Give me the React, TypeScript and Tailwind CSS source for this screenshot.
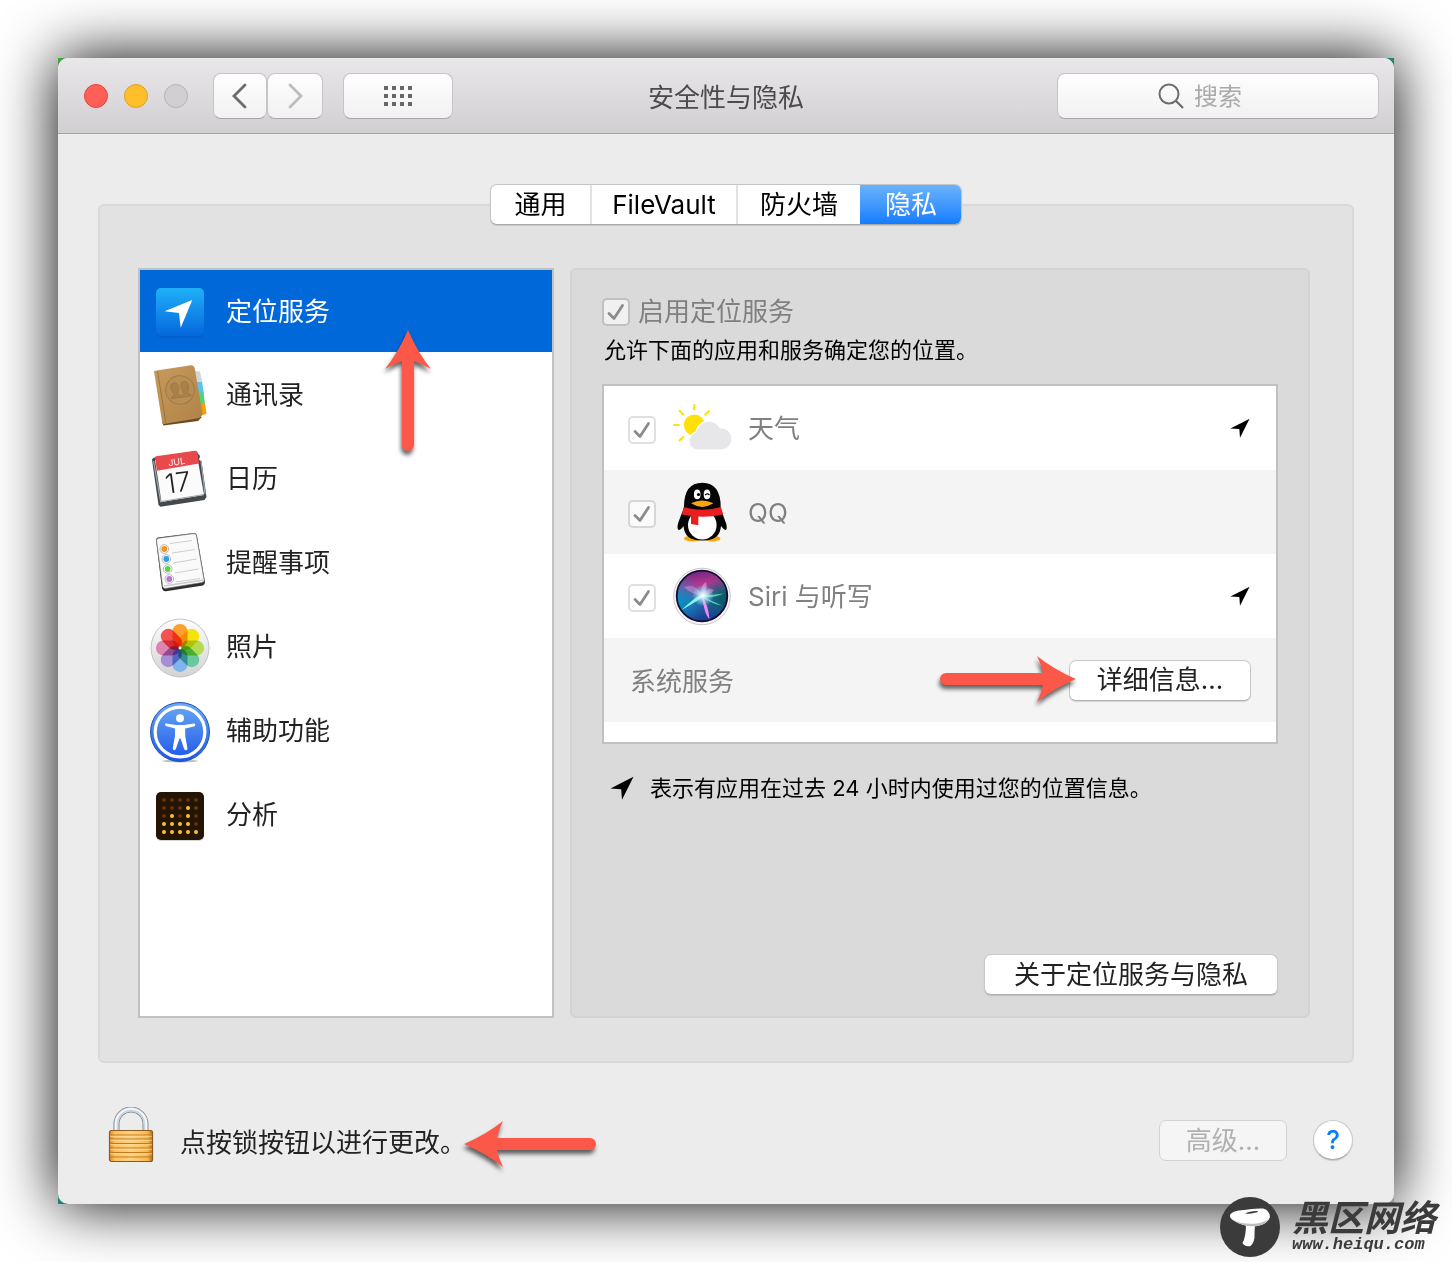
import React from "react";

type IconProps = { children: React.ReactNode };

function Icon({ children }: IconProps) {
  return (
    <svg viewBox="0 0 60 60" className="size-[60px] shrink-0 overflow-visible" aria-hidden="true">
      {children}
    </svg>
  );
}

function LocationIcon() {
  return (
    <Icon>
      <defs>
        <linearGradient id="g-loc" x1="0" y1="0" x2="0" y2="1">
          <stop offset="0" stopColor="#1fb0f8" />
          <stop offset="1" stopColor="#0567dd" />
        </linearGradient>
      </defs>
      <rect x="6" y="8.5" width="48" height="48" rx="5" fill="#0055b8" opacity=".5" />
      <rect x="6" y="7" width="48" height="48" rx="5" fill="url(#g-loc)" />
      <path d="M14.5 30.3 42.3 19 30.7 46.7 29 32Z" fill="#fff" />
    </Icon>
  );
}

function ContactsIcon() {
  return (
    <Icon>
      <defs>
        <linearGradient id="g-book" x1="0" y1="0" x2="1" y2="1">
          <stop offset="0" stopColor="#c79a5d" />
          <stop offset="1" stopColor="#b08247" />
        </linearGradient>
      </defs>
      <path d="M44.5 7 50 7.5 52.5 19 47 20Z" fill="#d3d6d8" />
      <path d="M46.5 18 52 18 54 29.5 48 30Z" fill="#58c4e8" />
      <path d="M48 29 53.5 28.5 55 40 49 41Z" fill="#55d36c" />
      <path d="M49 40 55 39 56.5 50 50.5 51.5Z" fill="#f2a10c" />
      <path d="M12 58 50 52.5 52 53 48 57 13.5 61.5Z" fill="#6c4a20" />
      <path d="M4 7.5Q4 7 5 6.8L41 1.3Q44 1 44.7 4L52.5 50Q52 52.5 49.5 54L14 60Q12.6 60.2 12.3 59Z" fill="url(#g-book)" />
      <path d="M7.5 7 16 59.5" stroke="#99703c" strokeWidth=".9" />
      <g transform="rotate(-8 30 26)">
        <circle cx="30" cy="26" r="14.3" fill="#b98e54" stroke="#a27a44" strokeWidth="1" />
        <path d="M20 33.5Q20.500 30.500 24 30Q20.500 25 21 21.500Q21.500 18 25 18Q28.500 18 29 21.500Q29 25 27 30Q30 30.500 30 33.500Z M30.500 33.500Q31 30.500 33.500 30Q31 26 31.300 21.500Q32 18 35 18Q38.500 18 39 21.500Q39.500 27 36.500 30Q40 30.500 40.500 33.500Z" fill="#a98048" stroke="#98713d" strokeWidth=".5" />
      </g>
    </Icon>
  );
}

function CalendarIcon() {
  return (
    <Icon>
      <path d="M2 12Q2 10 4.500 9.500L46 3 50 8 49 12 51.500 13 56.500 49 54.500 52 10.500 58.700 8.500 57Z" fill="#44494e" />
      <path d="M3.500 13 10.800 54.500M51 13 55 46" stroke="#a3a9ad" strokeWidth="1.200" />
      <path d="M5 12 47 7 54 47 11.500 54Z" fill="#fbfbfb" />
      <path d="M11.500 53.500 54 46.500" stroke="#a6a6a6" strokeWidth="1" />
      <path d="M5 9.500Q5 8.500 6 8.300L45 2.800Q47 2.600 47.500 4.500L49 15.500 7 22.800Z" fill="#e9494b" />
      <text x="26.500" y="17" transform="rotate(-8 26.500 13)" textAnchor="middle" fontSize="9" fill="#fff" className="font-[Inter]">JUL</text>
      <text x="28" y="44" transform="rotate(-8 28 35)" textAnchor="middle" fontSize="27" fontWeight="300" fill="#222" className="font-[Inter]">17</text>
    </Icon>
  );
}

function RemindersIcon() {
  const rows = [
    { x: 14.3, y: 17, c: "#fb9316" },
    { x: 16.3, y: 27, c: "#2b9fe8" },
    { x: 17.7, y: 37, c: "#5fd14c" },
    { x: 19.3, y: 47, c: "#bb74d6" },
  ];
  return (
    <Icon>
      <path d="M6 8Q6 6 8 5.500L44 1Q46 1 46.800 3L55 50Q55 52.500 53 53.500L16 59.200Q13 59.500 12 56.500Z" fill="#2f2f2f" />
      <path d="M6.500 8.500Q6.500 6.500 8.500 6.200L44 1.600Q46 1.600 46.400 3.500L54.200 48.500Q54 50 52 50.500L15 56.500Q13.200 56.500 12.700 54.500Z" fill="#fafafa" stroke="#777" strokeWidth=".6" />
      <path d="M14 54 53.500 48" stroke="#ccc" strokeWidth="1.500" />
      <path d="M20 11.500 42 8.500M22 21 45 17.500M23 31 46.500 27M25 41 48.500 37M26 50 50 46.500" stroke="#bcbcbc" strokeWidth=".7" />
      {rows.map((r) => (
        <g key={r.c}>
          <circle cx={r.x} cy={r.y} r="4.300" fill="#fff" stroke="#8e8e8e" strokeWidth=".6" />
          <circle cx={r.x} cy={r.y} r="2.900" fill={r.c} />
        </g>
      ))}
    </Icon>
  );
}

function PhotosIcon() {
  const petals = ["#fb9f2e", "#f6e30b", "#b3dc50", "#6cc7a0", "#7db5ec", "#a48fd3", "#dd84b3", "#f4524f"];
  return (
    <Icon>
      <defs>
        <linearGradient id="g-photos" x1="0" y1="0" x2="0" y2="1">
          <stop offset="0" stopColor="#fdfdfd" />
          <stop offset="1" stopColor="#d3d3d3" />
        </linearGradient>
      </defs>
      <circle cx="30" cy="32" r="29" fill="url(#g-photos)" stroke="#c4c4c4" strokeWidth="1" />
      <g className="isolate">
        {petals.map((c, i) => (
          <rect key={c} x="22.500" y="8" width="15" height="23.500" rx="7.300" fill={c} className="mix-blend-multiply" transform={`rotate(${i * 45} 30 32)`} />
        ))}
      </g>
      <circle cx="30" cy="32" r="1.400" fill="#fff" />
    </Icon>
  );
}

function AccessibilityIcon() {
  return (
    <Icon>
      <defs>
        <linearGradient id="g-acc" x1="0" y1="0" x2="0" y2="1">
          <stop offset="0" stopColor="#6aaaf3" />
          <stop offset="1" stopColor="#1d56ea" />
        </linearGradient>
      </defs>
      <ellipse cx="30" cy="61" rx="18" ry="1.500" fill="#000" opacity=".25" />
      <circle cx="30" cy="32" r="29.500" fill="url(#g-acc)" stroke="#1e54ad" strokeWidth="1" />
      <circle cx="30" cy="32" r="24.800" fill="none" stroke="#fff" strokeWidth="3.200" />
      <circle cx="30" cy="18.300" r="4" fill="#fff" />
      <path d="M15 24Q15 23.300 16.300 23.500L26 25H34L44 23.500Q45.500 23.500 45.300 25Q45 26.300 44 26.500L35.200 28.500V36L37.500 48.500Q37.500 50.500 35.700 50.300Q34.500 50.200 34 48.500L30.600 38.500H29.500L26 48.500Q25.300 50.300 24.200 50.200Q22.500 50 22.800 48L25 36V28.500L16 26Q15 25.500 15 24Z" fill="#fff" />
    </Icon>
  );
}

function AnalyticsIcon() {
  const lit = ["00000", "00010", "01010", "11110", "11111"];
  return (
    <Icon>
      <rect x="6" y="9" width="48" height="48" rx="5" fill="#aaa" opacity=".5" />
      <rect x="6" y="8" width="48" height="48" rx="5" fill="#241404" />
      {lit.map((row, y) =>
        row.split("").map((v, x) => (
          <circle key={`${x}-${y}`} cx={14 + x * 8} cy={16 + y * 8} r="2" fill={v === "1" ? "#fbc420" : x === 4 && y === 1 ? "#5a3c20" : "#62300c"} />
        )),
      )}
    </Icon>
  );
}

function WeatherIcon() {
  return (
    <Icon>
      <g stroke="#fbe01a" strokeWidth="2.200">
        <path d="M22.300 6.300V12.300M1.300 27H7.600M7 12.300 11.800 17.200M37.700 12.500 32.700 17.300M11.800 38.500 7 43" />
      </g>
      <circle cx="22.300" cy="27" r="10.500" fill="#ffe00a" />
      <g fill="#e7e7e9" stroke="#fff" strokeWidth="2.500" style={{ paintOrder: "stroke" }}>
        <path d="M26 51.500A8.600 8.600 0 0 1 24.500 34.500A12.500 12.500 0 0 1 48 30.500A10.500 10.500 0 0 1 50 51.500Z" />
      </g>
    </Icon>
  );
}

function QQIcon() {
  return (
    <Icon>
      <ellipse cx="20.500" cy="56.500" rx="8.500" ry="3" fill="#f8a40c" />
      <ellipse cx="40" cy="56.500" rx="8.500" ry="3" fill="#f8a40c" />
      <path d="M12 26Q11.500 .7 30.300 .7Q49 .7 48.700 26Q52 36 54 41Q55.500 46 54 48Q52 48 49 44Q48 59 30.300 58.500Q12.500 59 11.500 44Q9 48 6.500 48Q4.500 46 6.500 40Q9 33 12 26Z" fill="#050505" />
      <ellipse cx="30.300" cy="43" rx="14.300" ry="14.500" fill="#fff" />
      <path d="M11.500 25Q30 30.500 49 25L51 32.500Q31 37 10 32.500Z" fill="#ea1d1f" />
      <path d="M19 32H26.300V43.300L19 42Z" fill="#ea1d1f" />
      <ellipse cx="25.200" cy="12.400" rx="3.300" ry="4.800" fill="#fff" />
      <ellipse cx="35" cy="12.400" rx="3.300" ry="4.800" fill="#fff" />
      <circle cx="26.500" cy="12.500" r="1.600" fill="#000" />
      <path d="M33 13.200Q35 10.800 37.500 13" fill="none" stroke="#000" strokeWidth="1.200" />
      <path d="M19 21.300Q30 15.500 41.500 21.300Q30 28.500 19 21.300Z" fill="#f9a70d" />
    </Icon>
  );
}

function SiriIcon() {
  return (
    <Icon>
      <defs>
        <linearGradient id="g-siri" x1=".35" y1="0" x2=".5" y2="1">
          <stop offset="0" stopColor="#6c2580" />
          <stop offset=".28" stopColor="#b5378f" />
          <stop offset=".55" stopColor="#2c6fa8" />
          <stop offset="1" stopColor="#173b93" />
        </linearGradient>
        <radialGradient id="g-siri-left" cx="0" cy=".6" r=".55">
          <stop offset="0" stopColor="#0891c4" />
          <stop offset="1" stopColor="#0891c4" stopOpacity="0" />
        </radialGradient>
        <radialGradient id="g-siri-right" cx="1" cy=".55" r=".5">
          <stop offset="0" stopColor="#06585c" />
          <stop offset="1" stopColor="#06585c" stopOpacity="0" />
        </radialGradient>
        <radialGradient id="g-siri-core">
          <stop offset="0" stopColor="#fff" />
          <stop offset=".3" stopColor="#d9f6ff" stopOpacity=".8" />
          <stop offset="1" stopColor="#9fe8ff" stopOpacity="0" />
        </radialGradient>
      </defs>
      <circle cx="30" cy="30.500" r="28.300" fill="#f7f5f7" stroke="#c9c7c9" strokeWidth="1" />
      <circle cx="30" cy="30" r="25.300" fill="url(#g-siri)" />
      <circle cx="30" cy="30" r="25.300" fill="url(#g-siri-left)" />
      <circle cx="30" cy="30" r="25.300" fill="url(#g-siri-right)" stroke="#150c35" strokeWidth="1.800" />
      <path d="M12 21Q24 17 31 30Q35 20 42 24Q38 30 31 30Q20 29 12 21Z" fill="#e59be0" opacity=".45" />
      <path d="M31 29Q27 20 34 16Q36 24 31 29Z" fill="#e9a8ee" opacity=".55" />
      <path d="M30 28Q22 32 9.500 44Q22 37 31 31Z" fill="#7ff5ea" />
      <path d="M30 29Q40 29 52 27.500Q42 32 31 31L50 39.500Q40 38 30 31Z" fill="#5ce5b5" opacity=".85" />
      <path d="M30 30Q36 38 37.500 53Q32.500 49 30 30Z" fill="#ee8de6" />
      <circle cx="31" cy="29.500" r="11" fill="url(#g-siri-core)" />
    </Icon>
  );
}

function Pointer({ small = false }: { small?: boolean }) {
  return (
    <svg viewBox="0 0 24 24" className={small ? "size-5 shrink-0" : "size-6 shrink-0"} role="img" aria-label="位置">
      <path d="M.5 12.500 23.500.8 12 23.800 11.200 13.200Z" fill="#000" />
    </svg>
  );
}

const arrowShadow = "overflow-visible drop-shadow-[-1px_4px_2px_rgba(0,0,0,0.6)] pointer-events-none";

function CheckBox({ id }: { id: string }) {
  return (
    <span className="relative grid size-7 shrink-0 place-items-center">
      <input
        id={id}
        type="checkbox"
        defaultChecked
        disabled
        className="size-7 appearance-none rounded-[5px] border-2 border-black/12 bg-white/60 bg-clip-padding"
      />
      <svg viewBox="0 0 28 28" className="pointer-events-none absolute inset-0 size-7" aria-hidden="true">
        <path d="M7 15.500 12 20.500 20.500 7.500" fill="none" stroke="#8b8b8b" strokeWidth="2.800" strokeLinecap="round" strokeLinejoin="round" />
      </svg>
    </span>
  );
}

const sidebar = [
  { name: "定位服务", icon: <LocationIcon /> },
  { name: "通讯录", icon: <ContactsIcon /> },
  { name: "日历", icon: <CalendarIcon /> },
  { name: "提醒事项", icon: <RemindersIcon /> },
  { name: "照片", icon: <PhotosIcon /> },
  { name: "辅助功能", icon: <AccessibilityIcon /> },
  { name: "分析", icon: <AnalyticsIcon /> },
];

const apps = [
  { id: "weather", name: "天气", icon: <WeatherIcon />, recent: true },
  { id: "qq", name: "QQ", icon: <QQIcon />, recent: false },
  { id: "siri", name: "Siri 与听写", icon: <SiriIcon />, recent: true },
];

const toolButton =
  "flex h-[46px] items-center justify-center rounded-lg border border-[#c6c4c6] border-b-[#a9a7a9] bg-linear-to-b from-[#fefefe] to-[#f1f1f1]";
const pushButton =
  "h-[41px] rounded-[7px] border border-[#c9c9c9] border-b-[#adadad] bg-white leading-[38px] text-[#222] shadow-[0_1px_1px_rgba(0,0,0,0.12)]";

function TitleBar() {
  return (
    <header className="grid h-[76px] grid-cols-[1fr_auto_1fr] items-center border-b border-[#a5a3a5] bg-linear-to-b from-[#e9e7e9] to-[#d1cfd1] px-[15px] pt-px">
      <div className="flex items-center pl-[11px]">
        <div className="flex gap-4">
          <button aria-label="关闭" className="size-6 rounded-full border border-[#e2443f] bg-[#ff5f57]" />
          <button aria-label="最小化" className="size-6 rounded-full border border-[#dfa023] bg-[#ffbf2b]" />
          <button aria-label="缩放" disabled className="size-6 rounded-full border border-[#b3b1b3] bg-[#d1cfd1]" />
        </div>
        <button aria-label="后退" className={`${toolButton} ml-[25px] w-[54px]`}>
          <svg viewBox="0 0 16 26" className="h-[26px] w-4" aria-hidden="true">
            <path d="M13 2 2 13 13 24" fill="none" stroke="#6b6b6b" strokeWidth="2.800" strokeLinecap="round" />
          </svg>
        </button>
        <button aria-label="前进" disabled className={`${toolButton} w-14`}>
          <svg viewBox="0 0 16 26" className="h-[26px] w-4" aria-hidden="true">
            <path d="M3 2 14 13 3 24" fill="none" stroke="#bcbcbc" strokeWidth="2.800" strokeLinecap="round" />
          </svg>
        </button>
        <button aria-label="显示全部" className={`${toolButton} ml-5 w-[110px]`}>
          <svg viewBox="0 0 28 20" className="h-5 w-7" aria-hidden="true">
            {[0, 8, 16].map((y) => [0, 8, 16, 24].map((x) => <rect key={`${x}-${y}`} x={x} y={y} width="4" height="4" fill="#666" />))}
          </svg>
        </button>
      </div>
      <h1 className="pt-1 text-[#4c4a4c]">安全性与隐私</h1>
      <label className={`${toolButton} ml-auto w-[322px] gap-2.5 pr-[34px]`}>
        <svg viewBox="0 0 26 26" className="size-[26px] shrink-0" aria-hidden="true">
          <circle cx="11" cy="11" r="9.500" fill="none" stroke="#6d6d6d" strokeWidth="2" />
          <path d="M17.800 17.800 25 25" stroke="#6d6d6d" strokeWidth="2.200" />
        </svg>
        <input type="text" placeholder="搜索" aria-label="搜索" className="w-[50px] bg-transparent pt-0.5 text-[24px] leading-8 outline-none placeholder:text-[#aaa]" />
      </label>
    </header>
  );
}

function Tabs() {
  const tab = "h-full leading-[38px] text-black";
  return (
    <div role="tablist" className="relative z-10 mx-auto -mb-[21px] flex h-[41px] w-[472px] overflow-hidden rounded-[7px] border border-[#c4c4c4] border-b-[#a8a8a8] bg-white shadow-[0_1px_1px_rgba(0,0,0,0.12)]">
      <button role="tab" aria-selected="false" className={`${tab} w-[101px] border-r-2 border-[#e2e2e2]`}>通用</button>
      <button role="tab" aria-selected="false" className={`${tab} w-[146px] border-r-2 border-[#e2e2e2]`}>FileVault</button>
      <button role="tab" aria-selected="false" className={`${tab} w-[122px]`}>防火墙</button>
      <button role="tab" aria-selected="true" className="-my-px -mr-px h-[41px] flex-1 bg-linear-to-b from-[#6bb3fa] to-[#0a7bff] leading-10 text-white">隐私</button>
    </div>
  );
}

function Sidebar() {
  return (
    <ul className="w-[416px] shrink-0 border-2 border-[#c1c1c1] bg-white">
      {sidebar.map((item, i) => (
        <li key={item.name} className={i === 0 ? "relative h-[82px] bg-[#0068d9] text-white" : "h-[84px] text-[#222]"}>
          <button className="flex size-full items-center gap-4 pl-2.5 text-left">
            {item.icon}
            <span className="pt-0.5">{item.name}</span>
          </button>
          {i === 0 && (
            <svg viewBox="0 0 46 122" className={`absolute top-[60px] left-[245px] z-10 h-[122px] w-[46px] ${arrowShadow}`} aria-hidden="true">
              <path d="M17 115V31Q9 34 0 39Q13 23 23 0Q33 23 46 39Q37 34 29 31V115A6 6 0 0 1 17 115Z" fill="#fc584a" />
            </svg>
          )}
        </li>
      ))}
    </ul>
  );
}

function LocationPane() {
  return (
    <section className="flex flex-1 flex-col rounded-md border-2 border-[#d3d3d3] bg-[#dadada] px-[30px] pt-6 pb-[21px]">
      <div className="flex items-center gap-2 text-[#808080]">
        <CheckBox id="enable" />
        <label htmlFor="enable" className="leading-9">启用定位服务</label>
      </div>
      <p className="pl-0.5 text-[22px] leading-10 text-black">允许下面的应用和服务确定您的位置。</p>
      <ul className="mt-3.5 border-2 border-[#c1c1c1] bg-white pb-5">
        {apps.map((app) => (
          <li key={app.id} className="flex h-[84px] items-center gap-4 pr-[26px] pl-6 text-[#808080] even:bg-[#f4f4f4]">
            <div className="pt-1">
              <CheckBox id={app.id} />
            </div>
            {app.icon}
            <label htmlFor={app.id} className="flex-1 pt-0.5">{app.name}</label>
            {app.recent && <Pointer small />}
          </li>
        ))}
        <li className="flex h-[84px] items-center justify-between bg-[#f4f4f4] pr-[25px] pl-[26px] text-[#808080]">
          <span className="pt-1">系统服务</span>
          <div className="relative">
            <button className={`${pushButton} w-[182px]`}>详细信息...</button>
            <svg viewBox="0 0 136 46" className={`absolute -top-1 right-[175px] h-[46px] w-[136px] ${arrowShadow}`} aria-hidden="true">
              <path d="M6 17H103Q101.500 9 97 0Q113 13 136 23Q113 33 97 46Q101.500 37 103 29H6A6 6 0 0 1 6 17Z" fill="#fc584a" />
            </svg>
          </div>
        </li>
      </ul>
      <div className="mt-6 flex items-center gap-4 pl-2 text-[22px] leading-10 text-black">
        <Pointer />
        <p>表示有应用在过去 24 小时内使用过您的位置信息。</p>
      </div>
      <button className={`${pushButton} mt-auto ml-auto w-[294px]`}>关于定位服务与隐私</button>
    </section>
  );
}

function LockIcon() {
  return (
    <svg viewBox="0 0 46 66" className="h-[66px] w-[46px]" aria-hidden="true">
      <defs>
        <linearGradient id="g-lock" x1="0" x2="1" y1="0" y2="0">
          <stop offset="0" stopColor="#d58a2c" />
          <stop offset=".12" stopColor="#fbc05c" />
          <stop offset=".5" stopColor="#ffd180" />
          <stop offset=".88" stopColor="#f9b950" />
          <stop offset="1" stopColor="#b9731e" />
        </linearGradient>
      </defs>
      <path d="M8.500 25V17A14.500 14.500 0 0 1 37.500 17V25" fill="none" stroke="#7f858c" strokeWidth="6" />
      <path d="M8.500 25V17A14.500 14.500 0 0 1 37.500 17V25" fill="none" stroke="#ccd5df" strokeWidth="4.400" />
      <path d="M7.800 25V17A15.200 15.200 0 0 1 38.200 17V25" fill="none" stroke="#f6f9fc" strokeWidth="1.800" />
      <rect x="1.500" y="23.500" width="43" height="31" rx="2" fill="url(#g-lock)" stroke="#8b5a1c" strokeWidth="1.200" />
      <path d="M2 28H44M2 32H44M2 36.500H44M2 41H44M2 45.500H44M2 50H44" stroke="#c17a22" strokeWidth="1" />
      <path d="M2 29.300H44M2 33.300H44M2 37.800H44M2 42.300H44M2 46.800H44" stroke="#ffe3a6" strokeWidth=".7" />
    </svg>
  );
}

function Footer() {
  return (
    <footer className="flex items-center pt-11 pr-[41px] pb-[31px] pl-[50px]">
      <button aria-label="锁" className="shrink-0">
        <LockIcon />
      </button>
      <p className="ml-[26px] pt-1.5 whitespace-nowrap text-[#222]">点按锁按钮以进行更改。</p>
      <svg viewBox="0 0 132 46" className={`-ml-0.5 mt-2 h-[46px] w-[132px] ${arrowShadow}`} aria-hidden="true">
        <path d="M126 17H33Q34.500 9 39 0Q23 13 0 23Q23 33 39 46Q34.500 37 33 29H126A6 6 0 0 0 126 17Z" fill="#fc584a" />
      </svg>
      <button disabled className="ml-auto h-[41px] w-32 rounded-[7px] border border-[#d2d2d2] bg-[#f5f5f5] leading-10 text-[#b1b1b1]">
        高级...
      </button>
      <button aria-label="帮助" className="ml-[26px] size-10 rounded-full border border-[#c9c9c9] border-b-[#adadad] bg-white leading-9 font-medium text-[#0a7aff] shadow-[0_1px_1px_rgba(0,0,0,0.15)]">
        ?
      </button>
    </footer>
  );
}

function Watermark() {
  return (
    <div className="absolute right-4 bottom-[5px] flex items-center gap-3 text-[#3b3b3b]">
      <svg viewBox="0 0 60 60" className="size-[60px]" aria-hidden="true">
        <circle cx="30" cy="30" r="30" fill="#3b3b3b" />
        <path d="M26 27H35L34.500 37Q35 45 30.500 49Q25 50 22.500 46Q26 40 26 27Z" fill="#fff" />
        <path d="M10 18Q12 13.500 24 13Q34 11 43 11.500Q49.500 13 50 20Q48 27 37 29Q24 30.500 13.500 23.500Q9.500 21 10 18Z" fill="#fff" />
        <path d="M13 23Q24 28 37 26.500 45 25 49 21.500Q46 28 36 29.200 23 30 13 23Z" fill="#bdbdbd" />
        <path d="M25 16.500Q29 14 37 14Q40 14.500 35 15.800Q30 17 25 16.500Z" fill="#3b3b3b" />
      </svg>
      <div className="font-bold italic">
        <div className="text-[36px] leading-9">黑区网络</div>
        <div className="font-['Liberation_Mono',monospace] text-[17px] leading-[18px]">www.heiqu.com</div>
      </div>
    </div>
  );
}

export default function App() {
  return (
    <div className="relative min-h-screen overflow-hidden bg-white p-[58px] font-[Inter,'Noto_Sans_CJK_SC',sans-serif] text-[26px] leading-9">
      <div className="bg-linear-to-br from-[#3fa53a] via-[#1f8470] to-[#999999] shadow-[0_0_58px_#000]">
        <main className="overflow-hidden rounded-[10px] bg-[#ececec]">
          <TitleBar />
          <div className="px-10 pt-[50px]">
            <Tabs />
            <div className="flex min-h-[859px] gap-4 rounded-md border-2 border-[#d9d9d9] bg-[#e2e2e2] pt-[62px] pr-[42px] pb-[43px] pl-[38px]">
              <Sidebar />
              <LocationPane />
            </div>
          </div>
          <Footer />
        </main>
      </div>
      <Watermark />
    </div>
  );
}
